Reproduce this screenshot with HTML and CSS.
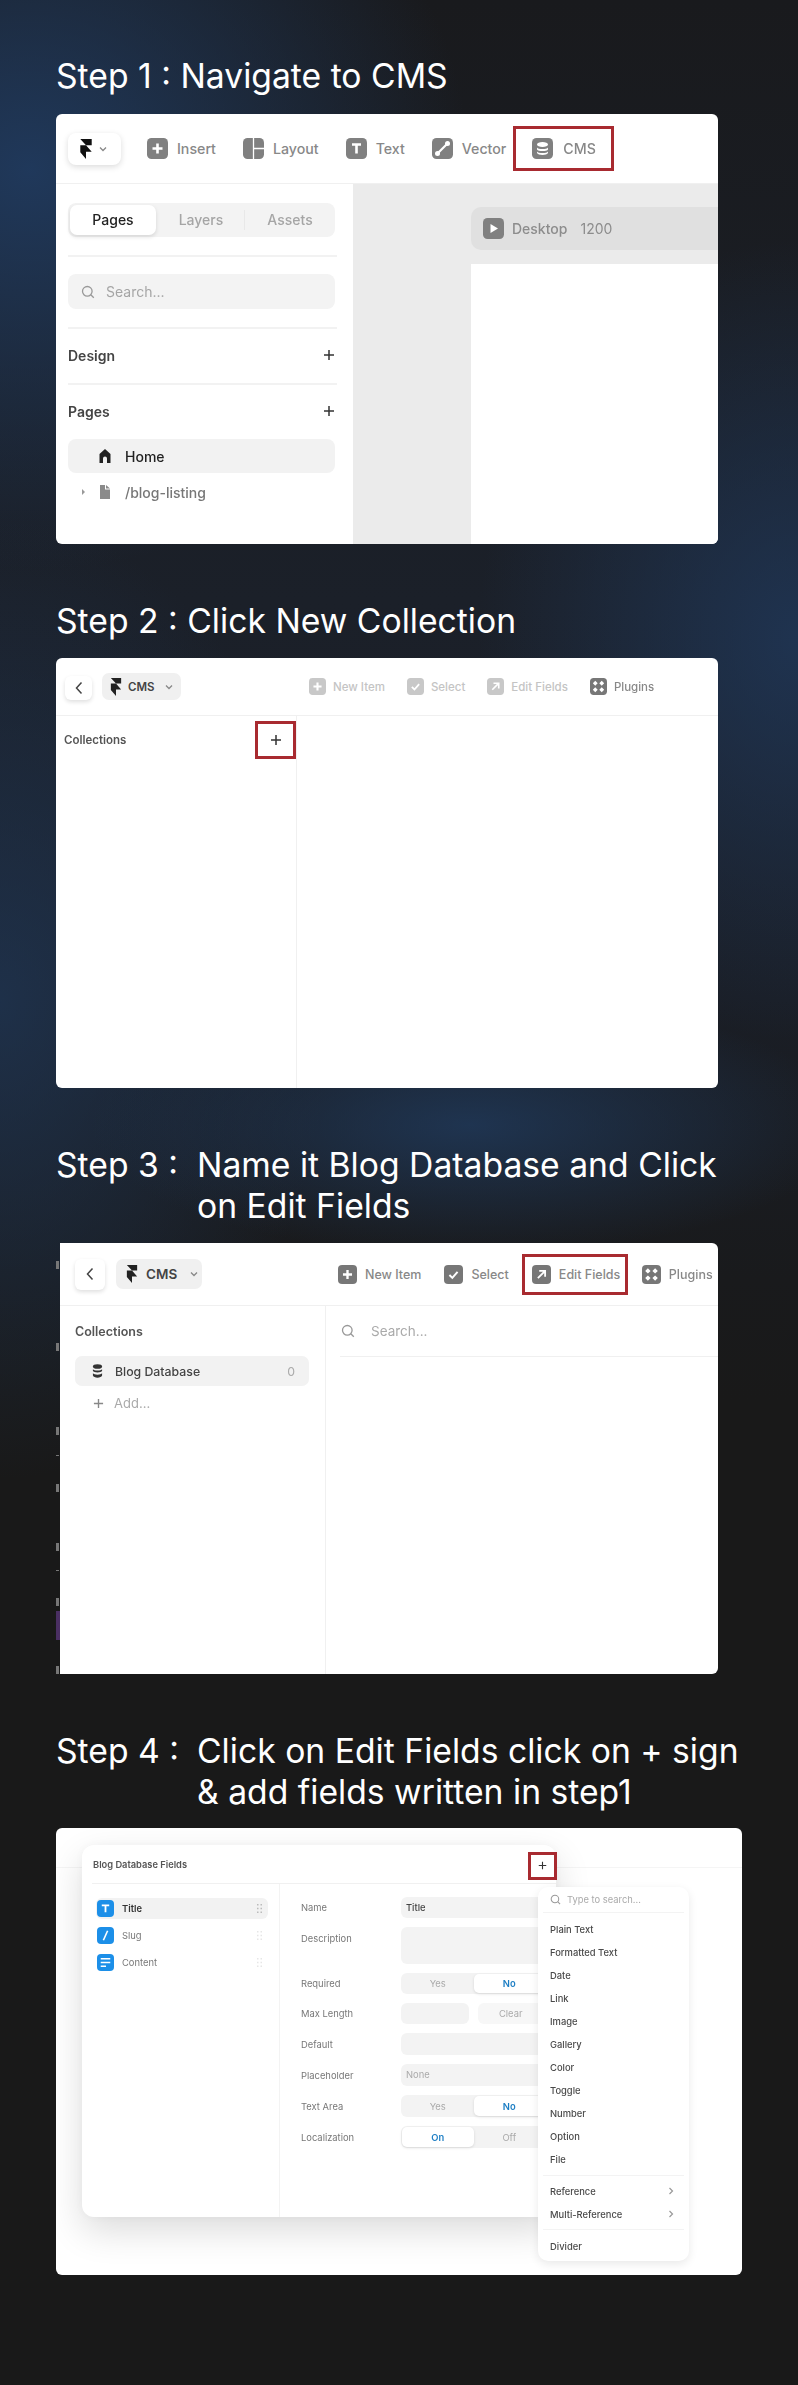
FILE: index.html
```html
<!DOCTYPE html>
<html lang="en">
<head>
<meta charset="utf-8">
<title>Framer CMS steps</title>
<link rel="stylesheet" href="styles.css">
</head>
<body>
<svg class="defs" xmlns="http://www.w3.org/2000/svg">
  <symbol id="framer" viewBox="0 0 14 21"><path d="M1 0h12v6.500H7zM1 6.500h6l6 7H7V21l-6-7z"/></symbol>
  <symbol id="i-plus" viewBox="0 0 21 21"><rect width="21" height="21" rx="4.500" fill="currentColor"/><path d="M10.500 5.500v10M5.500 10.500h10" stroke="#fff" stroke-width="2.600"/></symbol>
  <symbol id="i-layout" viewBox="0 0 21 21"><rect width="21" height="21" rx="4.500" fill="currentColor"/><path d="M10.500 0v21M10.500 10.500H21" stroke="#fff" stroke-width="1.300"/></symbol>
  <symbol id="i-text" viewBox="0 0 21 21"><rect width="21" height="21" rx="4.500" fill="currentColor"/><path d="M6 6.500h9M10.500 6.500v9" stroke="#fff" stroke-width="2.600"/></symbol>
  <symbol id="i-vector" viewBox="0 0 21 21"><rect width="21" height="21" rx="4.500" fill="currentColor"/><path d="M6 15L15 6" stroke="#fff" stroke-width="2.200"/><circle cx="5.500" cy="15.500" r="2.500" fill="#fff"/><circle cx="15.500" cy="5.500" r="2.500" fill="#fff"/></symbol>
  <symbol id="i-db" viewBox="0 0 21 21"><rect width="21" height="21" rx="4.500" fill="currentColor"/><ellipse cx="10.500" cy="6.500" rx="5.500" ry="2.500" fill="#fff"/><path d="M5 9.500c1 2 10 2 11 0v2c-1 2-10 2-11 0zM5 13.500c1 2 10 2 11 0v1.500c-1 2.500-10 2.500-11 0z" fill="#fff"/></symbol>
  <symbol id="i-play" viewBox="0 0 21 21"><rect width="21" height="21" rx="4.500" fill="currentColor"/><path d="M7.500 6l7.500 4.500-7.500 4.500z" fill="#fff"/></symbol>
  <symbol id="i-check" viewBox="0 0 21 21"><rect width="21" height="21" rx="4.500" fill="currentColor"/><path d="M6 11l3.200 3.200L15 7.500" fill="none" stroke="#fff" stroke-width="2.200"/></symbol>
  <symbol id="i-arrow" viewBox="0 0 21 21"><rect width="21" height="21" rx="4.500" fill="currentColor"/><path d="M6.500 14.500L14 7M8 6.500h6.500V13" fill="none" stroke="#fff" stroke-width="2"/></symbol>
  <symbol id="i-plugins" viewBox="0 0 21 21"><rect width="21" height="21" rx="4.500" fill="currentColor"/><path d="M6.500 3.500l3 3-3 3-3-3zM14.500 3.500l3 3-3 3-3-3zM6.500 11.500l3 3-3 3-3-3zM14.500 11.500l3 3-3 3-3-3z" fill="#fff"/></symbol>
  <symbol id="i-search" viewBox="0 0 14 14"><circle cx="6.300" cy="6.300" r="4.800" fill="none" stroke="currentColor" stroke-width="1.300"/><path d="M9.800 9.800l3 3" stroke="currentColor" stroke-width="1.300"/></symbol>
  <symbol id="i-chev" viewBox="0 0 10 10"><path d="M2 3.500l3 3 3-3" fill="none" stroke="currentColor" stroke-width="1.300"/></symbol>
  <symbol id="i-add" viewBox="0 0 12 12"><path d="M6 1v10M1 6h10" stroke="currentColor" stroke-width="1.500"/></symbol>
  <symbol id="i-stack" viewBox="0 0 12 16"><ellipse cx="6" cy="3" rx="5" ry="2.500" fill="currentColor"/><path d="M1 6c1 2 9 2 10 0v2c-1 2-9 2-10 0zM1 10.500c1 2 9 2 10 0V13c-1 3-9 3-10 0z" fill="currentColor"/></symbol>
  <symbol id="i-dots" viewBox="0 0 7 11"><path d="M1 1h1.500v1.500H1zM4.500 1H6v1.500H4.500zM1 4.700h1.500v1.500H1zM4.500 4.700H6v1.500H4.500zM1 8.400h1.500v1.500H1zM4.500 8.400H6v1.500H4.500z" fill="currentColor"/></symbol>
</svg>

<main class="page">

  <section class="step">
    <h2 class="title">Step 1 : Navigate to CMS</h2>
    <div class="card card-one">
      <header class="bar bar-one">
        <div class="logo-btn">
          <svg class="logo"><use href="#framer"/></svg>
          <svg class="chev"><use href="#i-chev"/></svg>
        </div>
        <div class="tool"><svg class="ic"><use href="#i-plus"/></svg>Insert</div>
        <div class="tool"><svg class="ic"><use href="#i-layout"/></svg>Layout</div>
        <div class="tool"><svg class="ic"><use href="#i-text"/></svg>Text</div>
        <div class="tool"><svg class="ic"><use href="#i-vector"/></svg>Vector</div>
        <div class="tool mark mark-cms"><svg class="ic"><use href="#i-db"/></svg>CMS</div>
      </header>
      <div class="split">
        <aside class="pane">
          <div class="tabs">
            <span class="tab tab-on">Pages</span>
            <span class="tab">Layers</span>
            <span class="tab tab-last">Assets</span>
          </div>
          <hr class="rule rule-a">
          <div class="search-box"><svg class="s-ic"><use href="#i-search"/></svg>Search...</div>
          <hr class="rule rule-b">
          <div class="sec"><span>Design</span><svg class="add"><use href="#i-add"/></svg></div>
          <hr class="rule rule-c">
          <div class="sec"><span>Pages</span><svg class="add"><use href="#i-add"/></svg></div>
          <div class="pg pg-on">
            <svg class="pg-ic" viewBox="0 0 12 14"><path d="M6 0l5.500 5v9H8V9.500a2 2 0 0 0-4 0V14H.5V5z" fill="#222"/></svg>Home
          </div>
          <div class="pg">
            <span class="tri"></span>
            <svg class="pg-ic pg-doc" viewBox="0 0 12 14"><path d="M1 0h5v4.500h5V14H1zM7 0l4 3.500H7z" fill="#8a8a8a"/></svg>/blog-listing
          </div>
        </aside>
        <div class="canvas">
          <div class="frame-bar">
            <svg class="ic"><use href="#i-play"/></svg>
            <span>Desktop</span><span class="frame-size">1200</span>
          </div>
          <div class="frame"></div>
        </div>
      </div>
    </div>
  </section>

  <section class="step">
    <h2 class="title">Step 2 : Click New Collection</h2>
    <div class="card card-two">
      <header class="bar bar-two">
        <div class="back"><svg class="back-ic" viewBox="0 0 8 14"><path d="M6.500 1.500L1.500 7l5 5.500" fill="none" stroke="#444" stroke-width="1.500"/></svg></div>
        <div class="pill"><svg class="logo logo-sm"><use href="#framer"/></svg><b>CMS</b><svg class="chev"><use href="#i-chev"/></svg></div>
        <div class="cmds">
          <div class="cmd off"><svg class="ic2"><use href="#i-plus"/></svg>New Item</div>
          <div class="cmd off"><svg class="ic2"><use href="#i-check"/></svg>Select</div>
          <div class="cmd off"><svg class="ic2"><use href="#i-arrow"/></svg>Edit Fields</div>
          <div class="cmd"><svg class="ic2"><use href="#i-plugins"/></svg>Plugins</div>
        </div>
      </header>
      <div class="split">
        <aside class="coll-two">
          <div class="coll-head">
            <span class="coll-t">Collections</span>
            <div class="mark mark-plus"><svg class="add"><use href="#i-add"/></svg></div>
          </div>
        </aside>
      </div>
    </div>
  </section>

  <section class="step">
    <h2 class="title title-wrap"><span>Step 3 :</span><span>Name it Blog Database and Click<br>on Edit Fields</span></h2>
    <div class="shot-row">
      <div class="sliver"></div>
      <div class="card card-three">
        <header class="bar bar-three">
          <div class="back back-lg"><svg class="back-ic" viewBox="0 0 8 14"><path d="M6.500 1.500L1.500 7l5 5.500" fill="none" stroke="#444" stroke-width="1.500"/></svg></div>
          <div class="pill pill-lg"><svg class="logo logo-sm"><use href="#framer"/></svg><b>CMS</b><svg class="chev"><use href="#i-chev"/></svg></div>
          <div class="cmds cmds-lg">
            <div class="cmd"><svg class="ic2"><use href="#i-plus"/></svg>New Item</div>
            <div class="cmd"><svg class="ic2"><use href="#i-check"/></svg>Select</div>
            <div class="cmd mark mark-edit"><svg class="ic2"><use href="#i-arrow"/></svg>Edit Fields</div>
            <div class="cmd"><svg class="ic2"><use href="#i-plugins"/></svg>Plugins</div>
          </div>
        </header>
        <div class="split">
          <aside class="coll-three">
            <div class="coll-t coll-t-lg">Collections</div>
            <div class="coll-row"><svg class="stack"><use href="#i-stack"/></svg><span>Blog Database</span><em>0</em></div>
            <div class="coll-add"><svg class="add"><use href="#i-add"/></svg>Add...</div>
          </aside>
          <div class="items">
            <div class="items-search"><svg class="s-ic"><use href="#i-search"/></svg>Search...</div>
          </div>
        </div>
      </div>
    </div>
  </section>

  <section class="step">
    <h2 class="title title-wrap title-four"><span>Step 4 :</span><span>Click on Edit Fields click on + sign<br>&amp; add fields written in step1</span></h2>
    <div class="card card-four">
      <div class="dialog">
        <header class="d-head">
          <span>Blog Database Fields</span>
          <div class="mark mark-dlg"><svg class="add"><use href="#i-add"/></svg></div>
        </header>
        <div class="d-body">
          <aside class="d-side">
            <div class="f-row f-on"><span class="f-ic"><svg viewBox="0 0 16 16"><path d="M4.500 5h7M8 5v6.500" stroke="#fff" stroke-width="1.700"/></svg></span>Title<svg class="dots"><use href="#i-dots"/></svg></div>
            <div class="f-row"><span class="f-ic"><svg viewBox="0 0 16 16"><path d="M10 3.500L6 12.500" stroke="#fff" stroke-width="1.500"/></svg></span>Slug<svg class="dots"><use href="#i-dots"/></svg></div>
            <div class="f-row"><span class="f-ic"><svg viewBox="0 0 16 16"><path d="M3.500 4.500h9M3.500 8h9M3.500 11.500h5" stroke="#fff" stroke-width="1.500"/></svg></span>Content<svg class="dots"><use href="#i-dots"/></svg></div>
          </aside>
          <div class="d-form">
            <div class="frow"><label>Name</label><div class="inp inp-val">Title</div></div>
            <div class="frow frow-desc"><label>Description</label><div class="inp"></div></div>
            <div class="frow"><label>Required</label><div class="seg"><span>Yes</span><span class="seg-on">No</span></div></div>
            <div class="frow"><label>Max Length</label><div class="pair"><div class="inp"></div><div class="clear">Clear</div></div></div>
            <div class="frow frow-h22"><label>Default</label><div class="inp"></div></div>
            <div class="frow frow-h22"><label>Placeholder</label><div class="inp inp-ph">None</div></div>
            <div class="frow frow-h22"><label>Text Area</label><div class="seg"><span>Yes</span><span class="seg-on">No</span></div></div>
            <div class="frow frow-h22"><label>Localization</label><div class="seg"><span class="seg-on">On</span><span>Off</span></div></div>
          </div>
        </div>
      </div>
      <div class="popup">
        <div class="pop-search"><svg class="s-ic"><use href="#i-search"/></svg>Type to search...</div>
        <ul class="pop-list pop-a">
          <li>Plain Text</li><li>Formatted Text</li><li>Date</li><li>Link</li><li>Image</li><li>Gallery</li><li>Color</li><li>Toggle</li><li>Number</li><li>Option</li><li>File</li>
        </ul>
        <ul class="pop-list pop-b">
          <li>Reference<svg class="pop-chev" viewBox="0 0 6 10"><path d="M1.500 2L4.500 5l-3 3" fill="none" stroke="#999" stroke-width="1.200"/></svg></li>
          <li>Multi-Reference<svg class="pop-chev" viewBox="0 0 6 10"><path d="M1.500 2L4.500 5l-3 3" fill="none" stroke="#999" stroke-width="1.200"/></svg></li>
        </ul>
        <ul class="pop-list pop-c"><li>Divider</li></ul>
      </div>
    </div>
  </section>

</main>
</body>
</html>
```

FILE: styles.css
```css
* { box-sizing: border-box; }
html, body { margin: 0; padding: 0; }
body {
  width: 798px;
  height: 2385px;
  overflow: hidden;
  font-family: Inter, "Liberation Sans", sans-serif;
  background-color: #191919;
  background-image:
    radial-gradient(ellipse 380px 130px at 470px 1125px, rgba(32,58,92,.8), rgba(32,58,92,0)),
    radial-gradient(ellipse 330px 480px at 0px 1000px, rgba(32,56,88,.7), rgba(32,56,88,0)),
    radial-gradient(ellipse 320px 400px at 798px 640px, rgba(32,56,90,.8), rgba(32,56,90,0)),
    radial-gradient(ellipse 440px 400px at 30px 170px, rgba(32,58,94,.95), rgba(32,58,94,0)),
    linear-gradient(#191a1d 0, #1b2029 600px, #1a1e26 1000px, #191a1c 1280px, #191919 1400px);
}
.defs { display: none; }
.page { padding: 55px 56px 0; display: flex; flex-direction: column; gap: 56px; }
.step { display: flex; flex-direction: column; }

.title {
  margin: 0 0 18px;
  font-size: 33.700px;
  line-height: 41px;
  font-weight: 400;
  color: #fff;
  white-space: nowrap;
}
.step + .step .title { margin-bottom: 17px; }
.step + .step .title-four { margin-bottom: 16px; }
.title-wrap { display: grid; grid-template-columns: 141px 1fr; }

.card {
  position: relative;
  background: #fff;
  border-radius: 6px;
  overflow: hidden;
  filter: blur(.35px);
  display: flex;
  flex-direction: column;
}
.card-one { height: 430px; width: 662px; }
.card-two { height: 430px; width: 662px; }
.shot-row { display: flex; width: 662px; }
.sliver {
  width: 4px;
  height: 431px;
  background:
    linear-gradient(#4a2f63,#4a2f63) 0 368px/4px 29px no-repeat,
    linear-gradient(#777,#777) 0 18px/3px 8px no-repeat,
    linear-gradient(#777,#777) 0 100px/3px 8px no-repeat,
    linear-gradient(#777,#777) 0 184px/3px 8px no-repeat,
    linear-gradient(#777,#777) 0 212px/3px 1px no-repeat,
    linear-gradient(#777,#777) 0 241px/3px 8px no-repeat,
    linear-gradient(#777,#777) 0 300px/3px 8px no-repeat,
    linear-gradient(#777,#777) 0 327px/3px 1px no-repeat,
    linear-gradient(#777,#777) 0 355px/3px 8px no-repeat,
    linear-gradient(#777,#777) 0 423px/3px 8px no-repeat;
}
.card-three { height: 431px; flex: 1; border-radius: 0 6px 6px 0; }
.card-four {
  height: 447px;
  width: 686px;
  background: linear-gradient(#f5f5f5,#f5f5f5) 0 39px/100% 1px no-repeat #fff;
  overflow: hidden;
}

.bar { display: flex; align-items: center; border-bottom: 1px solid #f0f0f0; flex: none; }
.split { display: flex; flex: 1; min-height: 0; }
.mark { border: 3px solid #a82a30; }

/* step 1 */
.bar-one { height: 70px; padding-left: 12px; color: #888; }
.logo-btn {
  width: 53px; height: 32px;
  margin-right: 26px;
  border-radius: 8px;
  background: #fff;
  box-shadow: 0 2px 6px rgba(0,0,0,.14);
  display: flex; align-items: center; padding-left: 11px; gap: 5px;
}
.logo { width: 14px; height: 20px; fill: #111; }
.chev { width: 10px; height: 10px; color: #888; }
.ic { width: 21px; height: 21px; color: #808080; flex: none; }
.tool {
  display: flex; align-items: center; gap: 9px;
  font-size: 14.200px; font-weight: 500; color: #888;
  margin-right: 27px;
}
.mark-cms {
  margin-left: -20px; margin-right: 0;
  width: 101px; height: 45px;
  padding-left: 16px;
  gap: 10px;
}

.pane { width: 297px; padding: 19px 12px 0; flex: none; }
.tabs {
  height: 34px; width: 267px;
  padding: 2px;
  background: #f3f3f3;
  border-radius: 8px;
  display: flex; align-items: center;
}
.tab { flex: 1; text-align: center; font-size: 14px; font-weight: 500; color: #a5a5a5; line-height: 30px; padding-left: 2px; }
.tab-on {
  flex: 0 0 86px;
  color: #222;
  background: #fff;
  border-radius: 7px;
  box-shadow: 0 2px 4px rgba(0,0,0,.12);
  padding-left: 0;
}
.tab-last { border-left: 1px solid #e8e8e8; line-height: 20px; }
.rule { border: 0; height: 2px; background: #f2f2f2; margin: 0; width: 269px; }
.rule-a { margin: 18px 0 17px; }
.search-box {
  width: 267px; height: 35px;
  background: #f3f3f3; border-radius: 8px;
  display: flex; align-items: center; gap: 11px;
  padding-left: 13px;
  font-size: 14px; color: #a5a5a5;
}
.s-ic { width: 14px; height: 14px; color: #999; flex: none; }
.rule-b { margin: 18px 0 0; }
.sec {
  height: 54px; width: 267px;
  display: flex; align-items: center; justify-content: space-between;
  padding-bottom: 2px;
  font-size: 14px; font-weight: 600; color: #444;
}
.rule-c { margin: 0; }
.add { width: 12px; height: 12px; color: #333; flex: none; }
.pg-on { background: #f2f2f2; border-radius: 8px; }
.pg {
  position: relative;
  width: 267px; height: 34px;
  display: flex; align-items: center;
  padding-left: 31px; gap: 14px;
  font-size: 14px; font-weight: 500; color: #777;
}
.pg-on { color: #222; }
.pg:last-child { margin-top: 2px; }
.pg-ic { width: 12px; height: 14px; flex: none; }
.tri {
  position: absolute; left: 14px; top: 14px;
  border-left: 3px solid #999;
  border-top: 3px solid transparent; border-bottom: 3px solid transparent;
}
.canvas {
  flex: 1; background: #ebebeb;
  padding: 23px 0 0 118px;
  display: flex; flex-direction: column;
}
.frame-bar {
  height: 43px;
  margin-bottom: 14px;
  background: #e0e0e0;
  border-radius: 10px 0 0 10px;
  display: flex; align-items: center; gap: 8px;
  padding-left: 12px;
  font-size: 14px; font-weight: 500; color: #8c8c8c;
}
.frame-size { margin-left: 5px; font-weight: 400; }
.frame { flex: 1; background: #fff; }

/* cms toolbars */
.bar-two { height: 58px; padding-left: 9px; }
.back {
  width: 27px; height: 24px;
  background: #fff; border-radius: 6px;
  box-shadow: 0 2px 4px rgba(0,0,0,.13);
  display: flex; align-items: center; justify-content: center;
  margin-top: 2px;
}
.back-ic { width: 8px; height: 14px; }
.pill {
  width: 79px; height: 27px;
  margin-left: 10px;
  background: #f0f0f0; border-radius: 7px;
  display: flex; align-items: center; padding-left: 8px; gap: 6px;
  font-size: 11.500px; color: #444;
}
.pill b { font-weight: 600; }
.pill .chev { margin-left: 3px; }
.logo-sm { width: 12px; height: 18px; fill: #222; }
.cmds { display: flex; align-items: center; gap: 22px; margin-left: 128px; }
.cmd { display: flex; align-items: center; gap: 7px; font-size: 11.500px; font-weight: 500; color: #888; white-space: nowrap; }
.cmd.off { color: #c4c4c4; }
.ic2 { width: 17px; height: 17px; color: #777; flex: none; }
.cmd.off .ic2 { color: #c8c8c8; }

.coll-two { width: 241px; flex: none; border-right: 1px solid #f0f0f0; height: 372px; }
.coll-head { display: flex; align-items: center; justify-content: space-between; padding: 5px 0 0 8px; }
.coll-t { font-size: 11.500px; font-weight: 600; color: #555; }
.mark-plus { width: 41px; height: 38px; display: flex; align-items: center; justify-content: center; }

/* step 3 */
.bar-three { height: 63px; padding-left: 15px; }
.back-lg { width: 30px; height: 31px; margin-top: 0; }
.pill-lg { width: 86px; height: 30px; margin-left: 11px; padding-left: 10px; gap: 8px; font-size: 13.500px; }
.pill-lg .chev { margin-left: 4px; }
.cmds-lg { margin-left: 136px; gap: 23px; }
.cmds-lg .cmd { font-size: 12.500px; gap: 8px; }
.cmds-lg .ic2 { width: 19px; height: 19px; }
.mark-edit {
  width: 106px; height: 41px;
  margin-left: -10px; margin-right: -9px;
  padding-left: 7px; gap: 7px;
}
.coll-three { width: 266px; flex: none; border-right: 1px solid #f0f0f0; padding: 18px 15px 0; }
.coll-t-lg { font-size: 12.500px; line-height: 16px; color: #555; margin-bottom: 16px; }
.coll-row {
  width: 234px; height: 30px;
  background: #f2f2f2; border-radius: 7px;
  display: flex; align-items: center;
  padding: 0 14px 0 17px; gap: 12px;
  font-size: 12.300px; font-weight: 500; color: #444;
}
.stack { width: 11px; height: 16px; color: #333; }
.coll-row em { margin-left: auto; font-style: normal; color: #aaa; font-weight: 400; }
.coll-add {
  display: flex; align-items: center; gap: 10px;
  height: 34px; padding-left: 18px;
  font-size: 13px; color: #aaa;
}
.coll-add .add { width: 11px; height: 11px; color: #888; }
.items { flex: 1; padding-left: 14px; }
.items-search {
  height: 51px; border-bottom: 1px solid #f0f0f0;
  display: flex; align-items: center; gap: 16px;
  padding-left: 1px;
  font-size: 13.500px; color: #aaa;
}

/* step 4 */
.dialog {
  width: 474px; height: 372px;
  margin: 17px 0 0 26px;
  background: #fff;
  border-radius: 12px;
  box-shadow: 0 14px 36px rgba(0,0,0,.14), 0 0 10px rgba(0,0,0,.03);
  display: flex; flex-direction: column;
}
.d-head {
  height: 39px; margin-left: 10px;
  border-bottom: 1px solid #f0f0f0;
  display: flex; align-items: center; justify-content: space-between;
  padding-left: 1px;
  font-size: 9.300px; font-weight: 600; color: #555;
}
.mark-dlg {
  width: 29px; height: 28px;
  display: flex; align-items: center; justify-content: center;
  margin-right: -1px; margin-top: 3px;
}
.mark-dlg .add { width: 9px; height: 9px; }
.d-body { flex: 1; display: flex; }
.d-side {
  width: 198px; flex: none;
  border-right: 1px solid #f3f3f3;
  padding: 14px 0 0 14px;
  display: flex; flex-direction: column; gap: 6px;
}
.f-row {
  width: 172px; height: 21px;
  border-radius: 6px;
  display: flex; align-items: center; gap: 8px;
  padding-left: 1px;
  font-size: 9.400px; color: #777;
}
.f-on { background: #f2f2f2; color: #333; font-weight: 600; }
.f-ic { width: 17px; height: 17px; background: #1c8fe8; border-radius: 4px; flex: none; display: block; }
.f-ic svg { width: 17px; height: 17px; display: block; }
.dots { width: 7px; height: 11px; margin-left: auto; margin-right: 5px; color: #bbb; }
.f-row:not(.f-on) .dots { color: #e6e6e6; }
.d-form { flex: 1; padding: 13px 0 0 21px; display: flex; flex-direction: column; gap: 9px; }
.frow { display: grid; grid-template-columns: 100px 145px; height: 21px; align-items: center; }
.frow-h22 { height: 22px; }
.frow label { font-size: 9.400px; color: #777; }
.frow-desc { height: 37px; }
.frow-desc label { align-self: start; padding-top: 6px; }
.inp {
  height: 100%;
  background: #f3f3f3; border-radius: 6px;
  font-size: 9.400px; line-height: 21px; padding-left: 5px;
}
.inp-val { color: #444; font-weight: 500; }
.inp-ph { color: #aaa; }
.seg {
  height: 100%;
  background: #f3f3f3; border-radius: 6px;
  display: grid; grid-template-columns: 1fr 1fr; align-items: stretch;
  padding: 1px;
  font-size: 9.400px; text-align: center; color: #aaa;
}
.seg span { display: flex; align-items: center; justify-content: center; }
.seg-on {
  background: #fff; border-radius: 5px;
  color: #1d7ec4; font-weight: 600;
  box-shadow: 0 1px 3px rgba(0,0,0,.12);
}
.pair { display: grid; grid-template-columns: 68px 1fr; gap: 9px; height: 100%; }
.clear {
  background: #f7f7f7; border-radius: 6px;
  font-size: 9.400px; color: #aaa; padding-left: 21px; line-height: 21px;
}
.popup {
  position: absolute;
  left: 482px; top: 59px;
  width: 151px; height: 374px;
  background: #fff;
  border-radius: 10px;
  box-shadow: 0 3px 10px rgba(0,0,0,.09);
  padding: 0 4px;
}
.pop-search {
  height: 26px; margin: 0 1px;
  border-bottom: 1px solid #f3f3f3;
  display: flex; align-items: center; gap: 6px;
  padding-left: 7px;
  font-size: 9.400px; color: #aaa;
}
.pop-search .s-ic { width: 11px; height: 11px; }
.pop-list { list-style: none; margin: 0 1px; padding: 0 8px 0 7px; border-bottom: 1px solid #f3f3f3; }
.pop-list li {
  height: 23px;
  display: flex; align-items: center; justify-content: space-between;
  font-size: 9.400px; font-weight: 500; color: #4a4a4a;
}
.pop-a { padding-top: 4.500px; padding-bottom: 4.500px; }
.pop-b { padding-top: 3.500px; padding-bottom: 3.500px; }
.pop-c { padding-top: 4.500px; border-bottom: 0; }
.pop-chev { width: 6px; height: 10px; margin-right: 2px; }
```
